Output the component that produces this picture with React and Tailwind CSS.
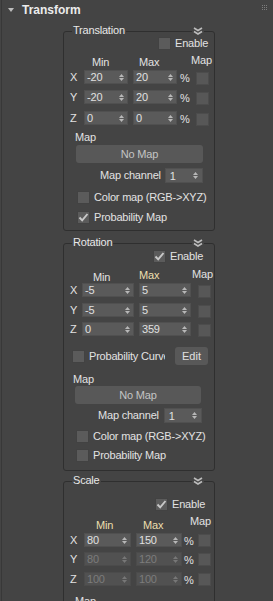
import React from 'react';

const txt = 'text-[11px] leading-[13px] tracking-[-0.2px] text-[#e2e2e2] whitespace-nowrap';

function Chevron() {
    return (
        <svg width="10" height="8" viewBox="0 0 10 8" className="block">
            <path d="M1 1 L5 3.5 L9 1" stroke="#bcbcbc" strokeWidth="1.6" fill="none" />
            <path d="M1 4.5 L5 7 L9 4.5" stroke="#bcbcbc" strokeWidth="1.6" fill="none" />
        </svg>
    );
}

function Check({ checked }) {
    return (
        <div className="w-[13px] h-[13px] shrink-0 bg-[#5b5b5b] border border-[#424242] flex items-center justify-center">
            {checked && (
                <svg width="11" height="11" viewBox="0 0 11 11" className="block">
                    <path d="M1.5 5.5 L4.2 8.4 L9.5 2" stroke="#c8c8c8" strokeWidth="1.9" fill="none" />
                </svg>
            )}
        </div>
    );
}

function CheckRow({ checked, label, className }) {
    return (
        <div className={`flex items-center h-[13px] ${className}`}>
            <Check checked={checked} />
            <span className={`${txt} ml-[4px]`}>{label}</span>
        </div>
    );
}

function Spin({ v, className, dim }) {
    return (
        <div className={`flex items-center h-[14px] shrink-0 border ${dim ? 'bg-[#515151] border-[#4b4b4b]' : 'bg-[#5a5a5a] border-[#505050]'} ${className}`}>
            <span className={`flex-1 pl-[2px] text-[11px] leading-[12px] tracking-[-0.2px] ${dim ? 'text-[#7c7c7c]' : 'text-[#e0e0e0]'}`}>{v}</span>
            <div className="flex flex-col gap-[1px] mr-[3px]">
                <svg width="5" height="3" viewBox="0 0 5 3" className="block">
                    <polygon points="0,3 5,3 2.5,0" fill={dim ? '#777' : '#b8b8b8'} />
                </svg>
                <svg width="5" height="3" viewBox="0 0 5 3" className="block">
                    <polygon points="0,0 5,0 2.5,3" fill={dim ? '#777' : '#b8b8b8'} />
                </svg>
            </div>
        </div>
    );
}

function MapBox({ className }) {
    return <div className={`w-[13px] h-[13px] shrink-0 bg-[#575757] border border-[#4c4c4c] ${className}`} />;
}

function GroupTitle({ title }) {
    return (
        <>
            <span className={`${txt} absolute left-[8px] top-[-9px] px-[1px] bg-[#444444] leading-[14px] text-[#e8e8e8]`}>{title}</span>
            <div className="absolute left-[128px] top-[-5px] px-[1px] bg-[#444444]">
                <Chevron />
            </div>
        </>
    );
}

function NoMap({ className }) {
    return (
        <div className={`h-[18px] rounded-[3px] bg-[#585858] flex items-center justify-center text-[11px] tracking-[-0.2px] text-[#c4c4c4] ${className}`}>
            No Map
        </div>
    );
}

function MapChannel({ className, textMl, spinMl }) {
    return (
        <div className={`flex items-center ${className}`}>
            <span className={`${txt} ${textMl}`}>Map channel</span>
            <div className={`flex items-center w-[38px] h-[15px] bg-[#5a5a5a] border border-[#505050] ${spinMl}`}>
                <span className="flex-1 pl-[4px] text-[11px] leading-[12px] text-[#e0e0e0]">1</span>
                <div className="flex flex-col gap-[1px] mr-[4px]">
                    <svg width="5" height="3" viewBox="0 0 5 3" className="block"><polygon points="0,3 5,3 2.5,0" fill="#b8b8b8" /></svg>
                    <svg width="5" height="3" viewBox="0 0 5 3" className="block"><polygon points="0,0 5,0 2.5,3" fill="#b8b8b8" /></svg>
                </div>
            </div>
        </div>
    );
}

function Translation() {
    const rows = [['X', '-20', '20', ''], ['Y', '-20', '20', 'mt-[6px]'], ['Z', '0', '0', 'mt-[7px]']];
    return (
        <div className="relative w-[152px] border border-[#2f2f2f] rounded-[3px] pb-[6px]">
            <GroupTitle title="Translation" />
            <CheckRow checked={false} label="Enable" className="mt-[5px] ml-[94px]" />
            <div className={`flex items-start h-[16px] mt-[4px] ${txt}`}>
                <span className="w-[75px] pl-[28px] mt-[2px]">Min</span>
                <span className="w-[52px] mt-[2px]">Max</span>
                <span>Map</span>
            </div>
            {rows.map(([l, a, b, m]) => (
                <div key={l} className={`flex items-start h-[14px] ${m} ${txt}`}>
                    <span className="w-[14px] ml-[6px] leading-[14px]">{l}</span>
                    <Spin v={a} className="w-[44px]" />
                    <Spin v={b} className="w-[44px] ml-[5px]" />
                    <span className="w-[16px] ml-[3px] leading-[16px]">%</span>
                    <MapBox className="mt-[2px]" />
                </div>
            ))}
            <div className={`${txt} mt-[6px] ml-[11px]`}>Map</div>
            <NoMap className="mt-[1px] ml-[12px] w-[127px]" />
            <MapChannel className="mt-[5px]" textMl="ml-[36px]" spinMl="ml-[4px]" />
            <CheckRow checked={false} label="Color map (RGB->XYZ)" className="mt-[8px] ml-[13px]" />
            <CheckRow checked={true} label="Probability Map" className="mt-[7px] ml-[13px]" />
        </div>
    );
}

function Rotation() {
    const rows = [['X', '-5', '5', ''], ['Y', '-5', '5', 'mt-[6px]'], ['Z', '0', '359', 'mt-[5px]']];
    return (
        <div className="relative w-[152px] border border-[#2f2f2f] rounded-[3px] pb-[8px] mt-[12px]">
            <GroupTitle title="Rotation" />
            <CheckRow checked={true} label="Enable" className="mt-[6px] ml-[89px]" />
            <div className={`flex items-start h-[15px] mt-[5px] ${txt}`}>
                <span className="w-[75px] pl-[29px] mt-[3px]">Min</span>
                <span className="w-[53px] mt-[1px] text-[#ecdfae]">Max</span>
                <span>Map</span>
            </div>
            {rows.map(([l, a, b, m]) => (
                <div key={l} className={`flex items-start h-[14px] ${m} ${txt}`}>
                    <span className="w-[12px] ml-[6px] leading-[14px]">{l}</span>
                    <Spin v={a} className="w-[52px]" />
                    <Spin v={b} className="w-[52px] ml-[5px]" />
                    <MapBox className="mt-[2px] ml-[7px]" />
                </div>
            ))}
            <div className="flex items-center h-[18px] mt-[11px]">
                <div className="ml-[8px]"><Check checked={false} /></div>
                <span className={`${txt} ml-[4px] w-[76px] overflow-hidden`}>Probability Curve</span>
                <div className="ml-[10px] w-[33px] h-[18px] rounded-[3px] bg-[#585858] flex items-center justify-center text-[11px] text-[#e0e0e0]">Edit</div>
            </div>
            <div className={`${txt} mt-[8px] ml-[9px]`}>Map</div>
            <NoMap className="ml-[11px] w-[126px]" />
            <MapChannel className="mt-[4px]" textMl="ml-[34px]" spinMl="ml-[5px]" />
            <CheckRow checked={false} label="Color map (RGB->XYZ)" className="mt-[7px] ml-[12px]" />
            <CheckRow checked={false} label="Probability Map" className="mt-[6px] ml-[12px]" />
        </div>
    );
}

function Scale() {
    const rows = [['X', '80', '150', '', false], ['Y', '80', '120', 'mt-[5px]', true], ['Z', '100', '100', 'mt-[6px]', true]];
    return (
        <div className="relative w-[152px] border border-[#2f2f2f] rounded-[3px] pb-[30px] mt-[10px]">
            <GroupTitle title="Scale" />
            <CheckRow checked={true} label="Enable" className="mt-[16px] ml-[91px]" />
            <div className={`flex items-start h-[18px] mt-[4px] ${txt}`}>
                <span className="w-[79px] pl-[32px] mt-[4px] text-[#ecdfae]">Min</span>
                <span className="w-[47px] mt-[4px] text-[#ecdfae]">Max</span>
                <span>Map</span>
            </div>
            {rows.map(([l, a, b, m, dim]) => (
                <div key={l} className={`flex items-start h-[14px] ${m} ${txt}`}>
                    <span className="w-[14px] ml-[6px] leading-[14px]">{l}</span>
                    <Spin v={a} className="w-[47px]" dim={dim} />
                    <Spin v={b} className="w-[46px] ml-[5px]" dim={dim} />
                    <span className="w-[14px] ml-[2px] leading-[16px]">%</span>
                    <MapBox className="mt-[1px]" />
                </div>
            ))}
            <div className={`${txt} mt-[9px] ml-[11px]`}>Map</div>
        </div>
    );
}

export default function App() {
    return (
        <div className="flex w-[273px] h-[601px] overflow-hidden bg-[#444444] font-['Liberation_Sans',Arial,sans-serif]">
            <div className="w-px shrink-0" />
            <div className="w-px shrink-0 bg-[#383838]" />
            <div className="flex-1 flex flex-col">
                <div className="flex items-center h-[19px] shrink-0">
                    <svg width="6" height="4" viewBox="0 0 6 4" className="block ml-[6px]">
                        <polygon points="0,0 6,0 3,4" fill="#bdbdbd" />
                    </svg>
                    <span className="ml-[8px] text-[12px] leading-[14px] font-bold text-[#ececec]">Transform</span>
                    <div className="ml-auto mr-[6px] self-start mt-[5px] grid grid-cols-3 gap-[1px]">
                        {Array.from({ length: 9 }).map((_, i) => (
                            <div key={i} className="w-px h-px bg-[#7d7d7d]" />
                        ))}
                    </div>
                </div>
                <div className="ml-[61px] mt-[12px] flex flex-col">
                    <Translation />
                    <Rotation />
                    <Scale />
                </div>
            </div>
        </div>
    );
}
